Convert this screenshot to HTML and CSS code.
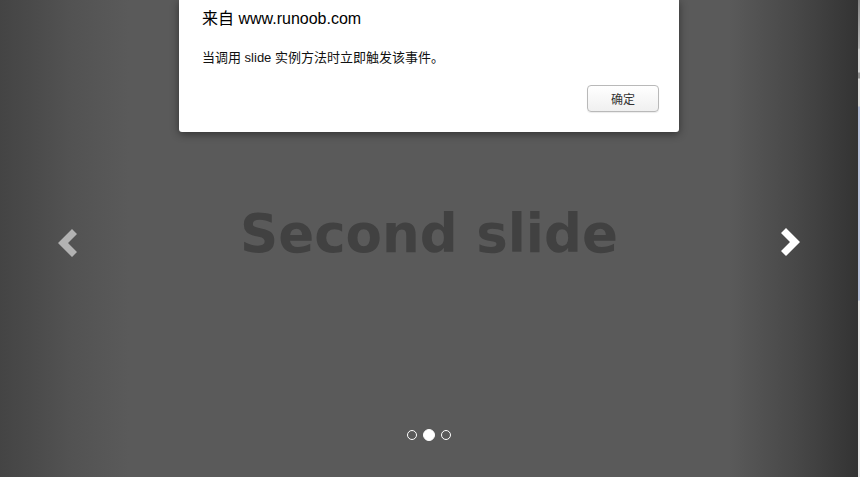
FILE: index.html
```html
<!DOCTYPE html>
<html lang="zh-CN">
<head>
<meta charset="utf-8">
<title>Carousel slide event</title>
<link rel="stylesheet" href="styles.css">
</head>
<body>
<div class="page">
  <div class="carousel">
    <div class="control control-left">
      <svg class="chevron" width="20" height="30" viewBox="0 0 20 30"><polygon points="1,15 15,1 20,6 11,15 20,24 15,29" fill="#b2b2b2"/></svg>
    </div>
    <div class="slide">
      <h1 class="caption">Second slide</h1>
    </div>
    <div class="control control-right">
      <svg class="chevron" width="20" height="30" viewBox="0 0 20 30"><polygon points="19,15 5,1 0,6 9,15 0,24 5,29" fill="#ffffff"/></svg>
    </div>
    <ol class="indicators">
      <li class="dot"></li>
      <li class="dot active"></li>
      <li class="dot"></li>
    </ol>
    <div class="alert">
      <div class="alert-title">来自 www.runoob.com</div>
      <div class="alert-msg">当调用 slide 实例方法时立即触发该事件。</div>
      <div class="alert-actions"><button class="btn">确定</button></div>
    </div>
  </div>
  <div class="edge"></div>
</div>
</body>
</html>
```
FILE: styles.css
```css
html, body {
  margin: 0;
  padding: 0;
  background: #ffffff;
}
.page {
  display: flex;
  width: 860px;
  height: 477px;
}
.carousel {
  position: relative;
  width: 858px;
  height: 477px;
  display: flex;
  background: linear-gradient(to right, #444444 0, #525252 8%, #5a5a5a 15%, #5a5a5a 85%, #474747 93%, #333333 100%);
  overflow: hidden;
}
.control {
  width: 129px;
  flex: none;
  display: flex;
  align-items: center;
  justify-content: center;
  box-sizing: border-box;
}
.control-left {
  padding-left: 5px;
  padding-top: 9px;
}
.control-right {
  padding-right: 5px;
  padding-top: 7px;
}
.chevron {
  display: block;
}
.slide {
  flex: 1;
  display: flex;
  align-items: center;
  justify-content: center;
  padding-bottom: 10px;
}
.caption {
  margin: 0;
  font-family: "DejaVu Sans", Verdana, sans-serif;
  font-weight: bold;
  font-size: 53px;
  color: #414141;
  white-space: nowrap;
}
.indicators {
  position: absolute;
  left: 0;
  right: 0;
  top: 429px;
  margin: 0;
  padding: 0;
  list-style: none;
  display: flex;
  justify-content: center;
  align-items: center;
  gap: 6px;
}
.dot {
  width: 10px;
  height: 10px;
  box-sizing: border-box;
  border: 1px solid #ffffff;
  border-radius: 50%;
}
.dot.active {
  width: 12px;
  height: 12px;
  background: #ffffff;
}
.alert {
  position: absolute;
  left: 179px;
  top: 0;
  width: 500px;
  height: 132px;
  box-sizing: border-box;
  padding: 9px 20px 0 23px;
  background: #ffffff;
  border-radius: 0 0 3px 3px;
  box-shadow: 0 2px 8px rgba(0, 0, 0, 0.45);
  display: flex;
  flex-direction: column;
  font-family: "Liberation Sans", "Noto Sans CJK SC", sans-serif;
  color: #000000;
}
.alert-title {
  font-size: 16px;
  line-height: 20px;
}
.alert-msg {
  margin-top: 20px;
  font-size: 13px;
  line-height: 18px;
  color: #111111;
}
.alert-actions {
  margin-top: 18px;
  display: flex;
  justify-content: flex-end;
}
.btn {
  width: 72px;
  height: 27px;
  padding: 0;
  border: 1px solid #b9b9b9;
  border-radius: 4px;
  background: linear-gradient(#ffffff, #f0f0f0);
  box-shadow: 0 1px 1px rgba(0, 0, 0, 0.08);
  font-family: "Liberation Sans", "Noto Sans CJK SC", sans-serif;
  font-size: 12px;
  color: #333333;
}
.edge {
  width: 2px;
  height: 477px;
  background: linear-gradient(to bottom, #888888 0, #bbbbbb 48px, #d8d8d8 50px, #d8d8d8 72px, #9a9a9a 73px, #9a9a9a 78px, #e0e0e0 79px, #e0e0e0 106px, #b9c3dd 107px, #b9c3dd 300px, #e8e8e8 301px, #e8e8e8 100%);
}
```
